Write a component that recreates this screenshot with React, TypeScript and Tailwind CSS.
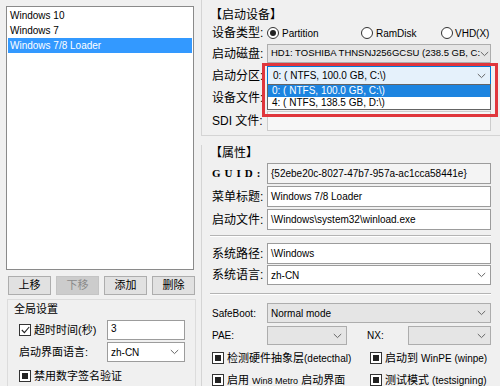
import React from "react";

function Chevron() {
  return (
    <svg width="9" height="6" viewBox="0 0 9 6" className="shrink-0">
      <path d="M0.8 1l3.7 3.6L8.2 1" fill="none" stroke="#666" strokeWidth="1" />
    </svg>
  );
}

function Tri() {
  // three-state checkbox, filled square
  return (
    <span className="w-[12px] h-[12px] shrink-0 border border-[#333] bg-white flex items-center justify-center">
      <span className="w-[6px] h-[6px] bg-[#222]" />
    </span>
  );
}

function Radio({ on }: { on?: boolean }) {
  return (
    <span className="w-[12px] h-[12px] shrink-0 rounded-full border border-[#333] bg-white flex items-center justify-center">
      {on && <span className="w-[6px] h-[6px] rounded-full bg-[#222]" />}
    </span>
  );
}

function Sep() {
  return <div className="-ml-[2px] w-[281px] h-[2px] border-t border-[#b4b4b4] border-b border-b-white" />;
}

export default function App() {
  const items = ["Windows 10", "Windows 7", "Windows 7/8 Loader"];

  return (
    <div className="w-[500px] h-[386px] overflow-hidden bg-[#f0f0f0] flex text-black text-[10px] font-['Liberation_Sans','Noto_Sans_CJK_SC',sans-serif]">
      {/* left column */}
      <div className="w-[201px] shrink-0 flex flex-col">
        <div className="ml-[6px] mt-[6px] w-[188px] h-[267px] border border-[#8a8a8a] bg-white pt-[1px]">
          {items.map((it, i) => (
            <div
              key={it}
              className={
                i === 2
                  ? "mx-[1px] h-[15px] leading-[15px] pl-[2px] bg-[#3399ff] text-white text-[10px]"
                  : "mx-[1px] h-[15px] leading-[15px] pl-[2px] text-[10px]"
              }
            >
              {it}
            </div>
          ))}
        </div>

        <div className="ml-[8px] mt-[6px] flex gap-[5px] text-[11px]">
          <button className="w-[43px] h-[19px] border border-[#adadad] bg-[#e1e1e1] leading-[17px]">上移</button>
          <button className="w-[43px] h-[19px] border border-[#c4c4c4] bg-[#cccccc] text-[#8a8a8a] leading-[17px]">下移</button>
          <button className="w-[43px] h-[19px] border border-[#adadad] bg-[#e1e1e1] leading-[17px]">添加</button>
          <button className="w-[43px] h-[19px] border border-[#adadad] bg-[#e1e1e1] leading-[17px]">删除</button>
        </div>

        <div className="ml-[7px] mt-[4px] w-[189px] flex-1 border-t border-l border-r border-[#dcdcdc]">
          <div className="pl-[6px] pt-[2px] text-[11px] leading-[14px]">全局设置</div>
          <div className="mt-[4px] pl-[11px] h-[20px] flex items-center">
            <div className="w-[88px] flex items-center gap-[3px] text-[11px]">
              <span className="w-[12px] h-[12px] shrink-0 border border-[#333] bg-white flex items-center justify-center">
                <svg width="9" height="8" viewBox="0 0 9 8">
                  <path d="M0.8 4l2.6 2.6L8.2 1" fill="none" stroke="#222" strokeWidth="1.1" />
                </svg>
              </span>
              <span>超时时间(秒)</span>
            </div>
            <div className="w-[78px] h-[20px] border border-[#9c9c9c] bg-white pl-[3px] leading-[16px]">3</div>
          </div>
          <div className="mt-[2px] pl-[11px] h-[20px] flex items-center">
            <div className="w-[88px] text-[11px]">启动界面语言:</div>
            <div className="w-[78px] h-[20px] border border-[#9c9c9c] bg-white pl-[3px] pr-[5px] flex items-center justify-between">
              <span>zh-CN</span>
              <Chevron />
            </div>
          </div>
          <div className="mt-[4px] pl-[11px] h-[20px] flex items-center gap-[3px] text-[11px]">
            <Tri />
            <span>禁用数字签名验证</span>
          </div>
        </div>
      </div>

      {/* right column */}
      <div className="flex-1 flex flex-col">
        {/* 启动设备 */}
        <div className="border-l border-b border-[#d4d4d4] pl-[10px] pt-[7px] pb-[4px]">
          <div className="-ml-[2px] h-[16px] leading-[16px] text-[12px]">【启动设备】</div>
          <div className="h-[20px] flex items-center">
            <span className="w-[55px] shrink-0 text-[12px]">设备类型:</span>
            <div className="w-[94px] flex items-center gap-[3px]">
              <Radio on />
              <span>Partition</span>
            </div>
            <div className="w-[80px] flex items-center gap-[3px]">
              <Radio />
              <span>RamDisk</span>
            </div>
            <div className="flex items-center gap-[2px]">
              <Radio />
              <span>VHD(X)</span>
            </div>
          </div>
          <div className="mt-[1px] h-[19px] flex items-center">
            <span className="w-[55px] shrink-0 text-[12px]">启动磁盘:</span>
            <div className="w-[224px] h-[19px] border border-[#adadad] bg-[#e5e5e5] pl-[3px] pr-[4px] flex items-center justify-between">
              <span className="whitespace-nowrap text-[9.5px]">HD1: TOSHIBA THNSNJ256GCSU (238.5 GB, C:</span>
              <Chevron />
            </div>
          </div>
          <div className="mt-[3px] h-[19px] flex items-center relative z-10">
            <span className="w-[55px] shrink-0 text-[12px]">启动分区:</span>
            <div className="relative w-[224px] h-[19px]">
              <div className="w-full h-full border border-[#0078d7] bg-[#e5f1fb] pl-[5px] pr-[4px] flex items-center justify-between">
                <span>0: ( NTFS, 100.0 GB, C:\)</span>
                <Chevron />
              </div>
              <div className="absolute left-0 top-[18px] w-full h-[26px] border border-[#646464] bg-white">
                <div className="h-[12px] leading-[12px] pl-[4px] bg-[#1c84e0] text-white">0: ( NTFS, 100.0 GB, C:\)</div>
                <div className="h-[12px] leading-[12px] pl-[4px]">4: ( NTFS, 138.5 GB, D:\)</div>
              </div>
              <div className="absolute -left-[5px] -top-[3px] w-[236px] h-[54px] border-[3px] border-[#e0363c] pointer-events-none" />
            </div>
          </div>
          <div className="mt-[3px] h-[20px] flex items-center">
            <span className="w-[55px] shrink-0 text-[12px]">设备文件:</span>
            <div className="w-[224px] h-[20px] border border-[#cccccc] bg-[#f7f7f7]" />
          </div>
          <div className="mt-[3px] h-[20px] flex items-center">
            <span className="w-[55px] shrink-0 text-[12px]">SDI 文件:</span>
            <div className="w-[224px] h-[20px] border border-[#cccccc] bg-[#f7f7f7]" />
          </div>
        </div>

        {/* 属性 */}
        <div className="mt-[9px] flex-1 border-l border-[#d4d4d4] pl-[10px]">
          <div className="-ml-[2px] h-[16px] leading-[16px] text-[12px]">【属性】</div>
          <div className="mt-[2px] h-[21px] flex items-center">
            <span className="w-[55px] shrink-0 font-['Liberation_Serif',serif] font-bold text-[11px] tracking-[4px]">GUID:</span>
            <div className="w-[224px] h-[21px] border border-[#9c9c9c] bg-[#f4f4f4] pl-[3px] leading-[19px]">
              {"{52ebe20c-8027-47b7-957a-ac1cca58441e}"}
            </div>
          </div>
          <div className="mt-[2px] h-[21px] flex items-center">
            <span className="w-[55px] shrink-0 text-[12px]">菜单标题:</span>
            <div className="w-[224px] h-[21px] border border-[#9c9c9c] bg-white pl-[3px] leading-[19px]">Windows 7/8 Loader</div>
          </div>
          <div className="mt-[2px] h-[21px] flex items-center">
            <span className="w-[55px] shrink-0 text-[12px]">启动文件:</span>
            <div className="w-[224px] h-[21px] border border-[#9c9c9c] bg-white pl-[3px] leading-[19px]">\Windows\system32\winload.exe</div>
          </div>
          <div className="mt-[5px]">
            <Sep />
          </div>
          <div className="mt-[6px] h-[21px] flex items-center">
            <span className="w-[55px] shrink-0 text-[12px]">系统路径:</span>
            <div className="w-[224px] h-[21px] border border-[#9c9c9c] bg-white pl-[3px] leading-[19px]">\Windows</div>
          </div>
          <div className="mt-[1px] h-[20px] flex items-center">
            <span className="w-[55px] shrink-0 text-[12px]">系统语言:</span>
            <div className="w-[224px] h-[20px] border border-[#9c9c9c] bg-white pl-[3px] pr-[4px] flex items-center justify-between">
              <span>zh-CN</span>
              <Chevron />
            </div>
          </div>
          <div className="mt-[8px]">
            <Sep />
          </div>
          <div className="mt-[8px] h-[20px] flex items-center">
            <span className="w-[55px] shrink-0">SafeBoot:</span>
            <div className="w-[224px] h-[20px] border border-[#adadad] bg-[#e5e5e5] pl-[3px] pr-[4px] flex items-center justify-between">
              <span>Normal mode</span>
              <Chevron />
            </div>
          </div>
          <div className="mt-[3px] h-[19px] flex items-center">
            <span className="w-[55px] shrink-0">PAE:</span>
            <div className="w-[80px] h-[19px] border border-[#adadad] bg-[#e5e5e5] pr-[4px] flex items-center justify-end">
              <Chevron />
            </div>
            <span className="ml-[20px] w-[41px] shrink-0">NX:</span>
            <div className="w-[83px] h-[19px] border border-[#adadad] bg-[#e5e5e5] pr-[4px] flex items-center justify-end">
              <Chevron />
            </div>
          </div>
          <div className="mt-[3px] h-[20px] flex items-center text-[11px]">
            <div className="w-[158px] flex items-center gap-[3px]">
              <Tri />
              <span>检测硬件抽象层<span className="text-[10px]">(detecthal)</span></span>
            </div>
            <div className="flex items-center gap-[3px]">
              <Tri />
              <span>启动到 <span className="text-[10px]">WinPE (winpe)</span></span>
            </div>
          </div>
          <div className="mt-[2px] h-[20px] flex items-center text-[11px]">
            <div className="w-[158px] flex items-center gap-[3px]">
              <Tri />
              <span>启用 <span className="text-[9px]">Win8 Metro</span> 启动界面</span>
            </div>
            <div className="flex items-center gap-[3px]">
              <Tri />
              <span>测试模式 <span className="text-[10px]">(testsigning)</span></span>
            </div>
          </div>
        </div>
      </div>
    </div>
  );
}
